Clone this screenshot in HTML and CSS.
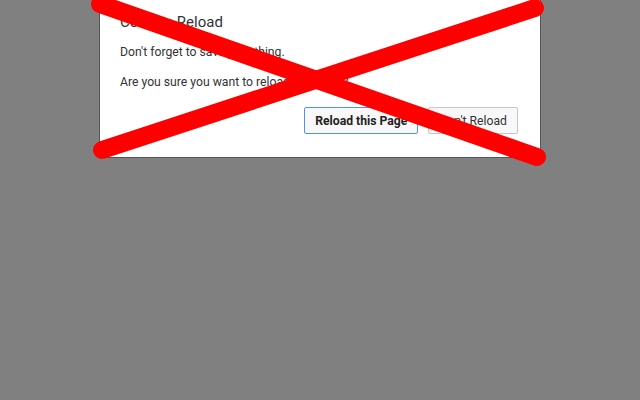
FILE: index.html
```html
<!DOCTYPE html>
<html>
<head>
<meta charset="utf-8">
<title>Confirm Reload</title>
<link rel="stylesheet" href="styles.css">
</head>
<body>
<div class="dialog">
  <h1 class="title">Confirm Reload</h1>
  <p class="msg">Don't forget to save your thing.</p>
  <p class="msg">Are you sure you want to reload this page?</p>
  <div class="actions">
    <button class="btn btn-primary">Reload this Page</button>
    <button class="btn">Don't Reload</button>
  </div>
</div>
<svg class="cross" width="640" height="400" viewBox="0 0 640 400">
  <line x1="100" y1="4" x2="537" y2="157" />
  <line x1="102" y1="150" x2="535" y2="8" />
</svg>
</body>
</html>
```
FILE: styles.css
```css
html, body {
  margin: 0;
  padding: 0;
}
body {
  background: #808080;
  width: 640px;
  height: 400px;
  position: relative;
  overflow: hidden;
  font-family: Roboto, "Liberation Sans", sans-serif;
  color: #333;
}
.dialog {
  margin-left: 99px;
  width: 440px;
  background: #fff;
  border: 1px solid #555;
  border-top: none;
  padding: 12px 0 23px 0;
  box-sizing: content-box;
}
.title {
  margin: 0 20px 10px 20px;
  font-size: 15px;
  font-weight: normal;
  line-height: 20px;
  color: #333;
}
.msg {
  margin: 10px 20px 0 20px;
  font-size: 12.2px;
  line-height: 20px;
}
.actions {
  display: flex;
  justify-content: flex-end;
  gap: 10px;
  margin-top: 15px;
  padding-right: 22px;
}
.btn {
  height: 27px;
  padding: 0 10px;
  font-family: Roboto, "Liberation Sans", sans-serif;
  font-size: 12.2px;
  color: #333;
  background: #f8f8f8;
  border: 1px solid #c6c6c6;
  border-radius: 2px;
  box-sizing: border-box;
}
.btn-primary {
  font-weight: bold;
  color: #222;
  border-color: #4d90fe;
}
.cross {
  position: absolute;
  top: 0;
  left: 0;
  pointer-events: none;
}
.cross line {
  stroke: #ff0000;
  stroke-width: 18;
  stroke-linecap: round;
}
```
